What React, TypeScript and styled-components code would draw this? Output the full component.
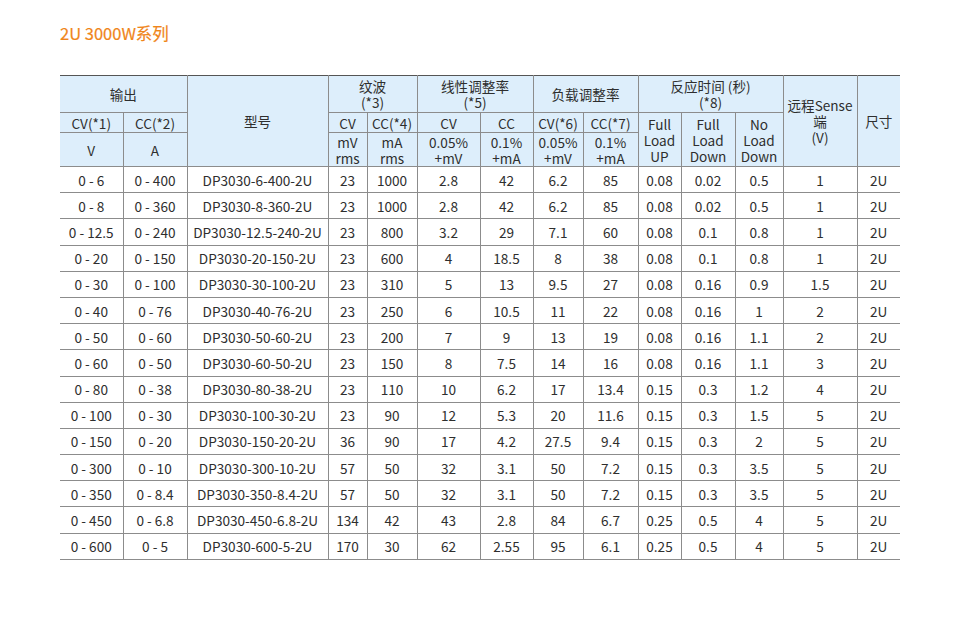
import React from 'react';
import styled, { createGlobalStyle } from 'styled-components';

const GlobalStyle = createGlobalStyle`
  body {
    margin: 0;
    background: #ffffff;
    font-family: "Noto Sans CJK SC", "Noto Sans", sans-serif;
    color: #333333;
  }
`;

const Page = styled.div`
  width: 960px;
  height: 633px;
  padding: 24px 60px 0;
  box-sizing: border-box;
`;

const Title = styled.h2`
  margin: 0 0 32px;
  font-size: 16.5px;
  line-height: 19px;
  font-weight: 400;
  color: #f08519;
  -webkit-text-stroke: 0.2px #f08519;
`;

const SpecTable = styled.table`
  width: 840px;
  border-collapse: collapse;
  table-layout: fixed;
  font-size: 13.6px;
  line-height: 16px;
  text-align: center;
  color: #2e2e2e;
`;

const HeadRow = styled.tr<{ $h: number }>`
  height: ${({ $h }) => $h}px;
`;

const HeadCell = styled.th<{ $edge?: boolean; $top?: boolean }>`
  padding: 0;
  font-weight: 400;
  vertical-align: middle;
  background: #ddeefb;
  border-top: 1px solid ${({ $top }) => ($top ? '#555555' : '#8c8c8c')};
  border-bottom: 1px solid #8c8c8c;
  border-right: ${({ $edge }) => ($edge ? 'none' : '1px solid #8c8c8c')};
`;

const BodyRow = styled.tr`
  height: 26.2px;
`;

const Cell = styled.td`
  padding: 0;
  vertical-align: middle;
  white-space: nowrap;
  border-bottom: 1px solid #8c8c8c;
  border-right: 1px solid #8c8c8c;

  &:last-child {
    border-right: none;
  }
`;

const widths = [63, 64, 141, 39, 50, 63, 53, 50, 55, 43, 54, 48, 74, 43];

const rows = [
  ['0 - 6', '0 - 400', 'DP3030-6-400-2U', '23', '1000', '2.8', '42', '6.2', '85', '0.08', '0.02', '0.5', '1', '2U'],
  ['0 - 8', '0 - 360', 'DP3030-8-360-2U', '23', '1000', '2.8', '42', '6.2', '85', '0.08', '0.02', '0.5', '1', '2U'],
  ['0 - 12.5', '0 - 240', 'DP3030-12.5-240-2U', '23', '800', '3.2', '29', '7.1', '60', '0.08', '0.1', '0.8', '1', '2U'],
  ['0 - 20', '0 - 150', 'DP3030-20-150-2U', '23', '600', '4', '18.5', '8', '38', '0.08', '0.1', '0.8', '1', '2U'],
  ['0 - 30', '0 - 100', 'DP3030-30-100-2U', '23', '310', '5', '13', '9.5', '27', '0.08', '0.16', '0.9', '1.5', '2U'],
  ['0 - 40', '0 - 76', 'DP3030-40-76-2U', '23', '250', '6', '10.5', '11', '22', '0.08', '0.16', '1', '2', '2U'],
  ['0 - 50', '0 - 60', 'DP3030-50-60-2U', '23', '200', '7', '9', '13', '19', '0.08', '0.16', '1.1', '2', '2U'],
  ['0 - 60', '0 - 50', 'DP3030-60-50-2U', '23', '150', '8', '7.5', '14', '16', '0.08', '0.16', '1.1', '3', '2U'],
  ['0 - 80', '0 - 38', 'DP3030-80-38-2U', '23', '110', '10', '6.2', '17', '13.4', '0.15', '0.3', '1.2', '4', '2U'],
  ['0 - 100', '0 - 30', 'DP3030-100-30-2U', '23', '90', '12', '5.3', '20', '11.6', '0.15', '0.3', '1.5', '5', '2U'],
  ['0 - 150', '0 - 20', 'DP3030-150-20-2U', '36', '90', '17', '4.2', '27.5', '9.4', '0.15', '0.3', '2', '5', '2U'],
  ['0 - 300', '0 - 10', 'DP3030-300-10-2U', '57', '50', '32', '3.1', '50', '7.2', '0.15', '0.3', '3.5', '5', '2U'],
  ['0 - 350', '0 - 8.4', 'DP3030-350-8.4-2U', '57', '50', '32', '3.1', '50', '7.2', '0.15', '0.3', '3.5', '5', '2U'],
  ['0 - 450', '0 - 6.8', 'DP3030-450-6.8-2U', '134', '42', '43', '2.8', '84', '6.7', '0.25', '0.5', '4', '5', '2U'],
  ['0 - 600', '0 - 5', 'DP3030-600-5-2U', '170', '30', '62', '2.55', '95', '6.1', '0.25', '0.5', '4', '5', '2U'],
];

export default function App() {
  return (
    <Page>
      <GlobalStyle />
      <Title>2U 3000W系列</Title>
      <SpecTable>
        <colgroup>
          {widths.map((w, i) => (
            <col key={i} style={{ width: w }} />
          ))}
        </colgroup>
        <thead>
          <HeadRow $h={37}>
            <HeadCell $top colSpan={2}>输出</HeadCell>
            <HeadCell $top rowSpan={3}>型号</HeadCell>
            <HeadCell $top colSpan={2}>
              纹波
              <br />
              (*3)
            </HeadCell>
            <HeadCell $top colSpan={2}>
              线性调整率
              <br />
              (*5)
            </HeadCell>
            <HeadCell $top colSpan={2}>负载调整率</HeadCell>
            <HeadCell $top colSpan={3}>
              反应时间 (秒)
              <br />
              (*8)
            </HeadCell>
            <HeadCell $top rowSpan={3}>
              远程Sense
              <br />
              端
              <br />
              (V)
            </HeadCell>
            <HeadCell $top $edge rowSpan={3}>
              尺寸
            </HeadCell>
          </HeadRow>
          <HeadRow $h={20}>
            <HeadCell>CV(*1)</HeadCell>
            <HeadCell>CC(*2)</HeadCell>
            <HeadCell>CV</HeadCell>
            <HeadCell>CC(*4)</HeadCell>
            <HeadCell>CV</HeadCell>
            <HeadCell>CC</HeadCell>
            <HeadCell>CV(*6)</HeadCell>
            <HeadCell>CC(*7)</HeadCell>
            <HeadCell rowSpan={2}>
              Full
              <br />
              Load
              <br />
              UP
            </HeadCell>
            <HeadCell rowSpan={2}>
              Full
              <br />
              Load
              <br />
              Down
            </HeadCell>
            <HeadCell rowSpan={2}>
              No
              <br />
              Load
              <br />
              Down
            </HeadCell>
          </HeadRow>
          <HeadRow $h={34}>
            <HeadCell>V</HeadCell>
            <HeadCell>A</HeadCell>
            <HeadCell>
              mV
              <br />
              rms
            </HeadCell>
            <HeadCell>
              mA
              <br />
              rms
            </HeadCell>
            <HeadCell>
              0.05%
              <br />
              +mV
            </HeadCell>
            <HeadCell>
              0.1%
              <br />
              +mA
            </HeadCell>
            <HeadCell>
              0.05%
              <br />
              +mV
            </HeadCell>
            <HeadCell>
              0.1%
              <br />
              +mA
            </HeadCell>
          </HeadRow>
        </thead>
        <tbody>
          {rows.map((row, r) => (
            <BodyRow key={r}>
              {row.map((v, c) => (
                <Cell key={c}>{v}</Cell>
              ))}
            </BodyRow>
          ))}
        </tbody>
      </SpecTable>
    </Page>
  );
}
